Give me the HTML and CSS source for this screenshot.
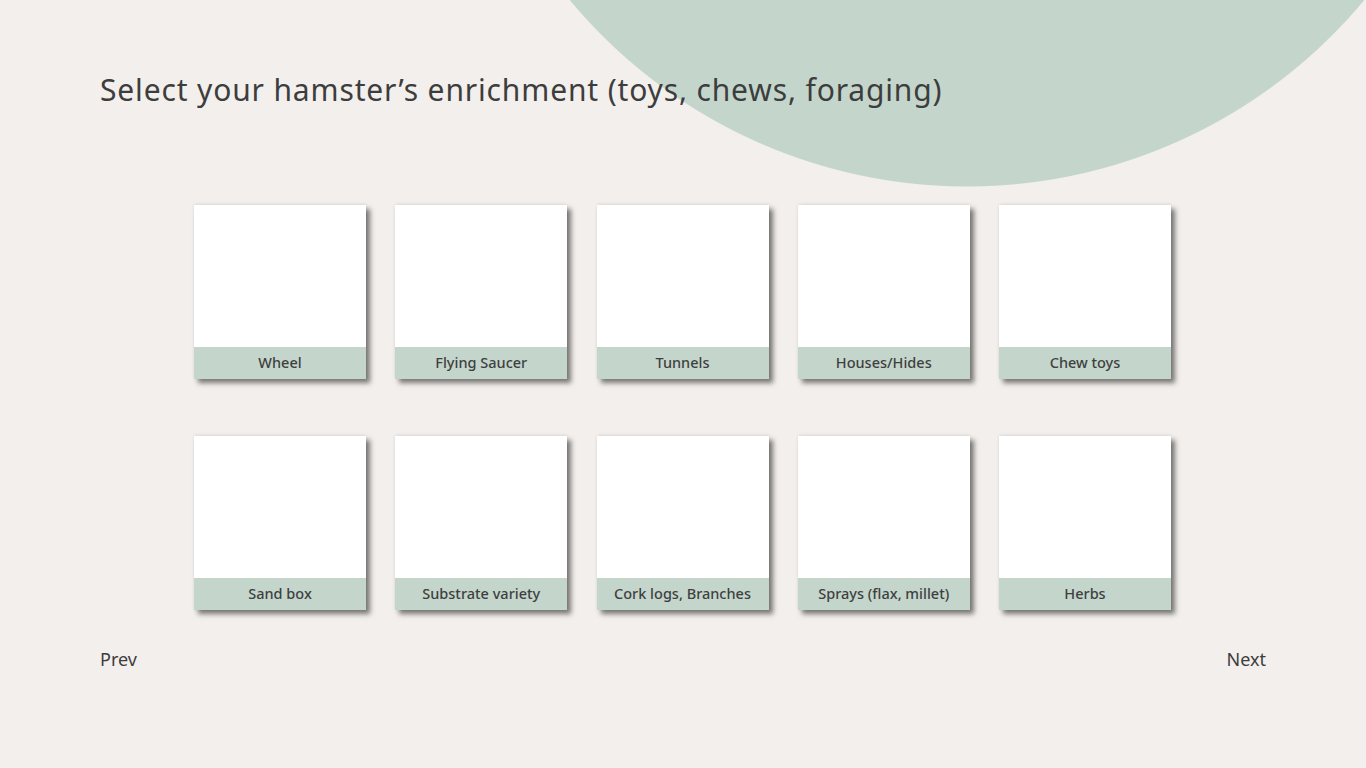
FILE: index.html
```html
<!DOCTYPE html>
<html>
<head>
	<title>Hamster Enrichment</title>
	<link rel="stylesheet" href="styles.css">
</head>
<body>
	<main class="page">
		<h1 class="title">Select your hamster’s enrichment (toys, chews, foraging)</h1>

		<div class="grid">
			<div class="card"><div class="pic"></div><div class="label">Wheel</div></div>
			<div class="card"><div class="pic"></div><div class="label">Flying Saucer</div></div>
			<div class="card"><div class="pic"></div><div class="label">Tunnels</div></div>
			<div class="card"><div class="pic"></div><div class="label">Houses/Hides</div></div>
			<div class="card"><div class="pic"></div><div class="label">Chew toys</div></div>

			<div class="card"><div class="pic"></div><div class="label">Sand box</div></div>
			<div class="card"><div class="pic"></div><div class="label">Substrate variety</div></div>
			<div class="card"><div class="pic"></div><div class="label">Cork logs, Branches</div></div>
			<div class="card"><div class="pic"></div><div class="label">Sprays (flax, millet)</div></div>
			<div class="card"><div class="pic"></div><div class="label">Herbs</div></div>
		</div>

		<nav class="pager">
			<a href="#">Prev</a>
			<a href="#">Next</a>
		</nav>
	</main>
</body>
</html>
```

FILE: styles.css
```css
html, body {margin:0; padding:0;}
/* big green half circle behind the title is drawn as a background */
body {color:#3d3d3d; font-family:"Noto Sans", Arial, sans-serif; height:768px; overflow:hidden;
	background:#f2efec radial-gradient(circle 517px at 967px -330px, #c4d6cc 99.8%, rgba(196,214,204,0) 100%) no-repeat;}

.page {padding:0 100px;}
.title {margin:0; padding-top:69px; font-size:30px; font-weight:400; line-height:42px;
	letter-spacing:0.85px;}

.grid {display:flex; flex-wrap:wrap; justify-content:space-between; row-gap:57px;
	width:977px; margin:94px 0 0 94px;}
.card {width:172px; height:174px; background:#fff; display:flex; flex-direction:column;
	box-shadow:4px 4px 5px rgba(0,0,0,0.5), 0 -1px 3px rgba(0,0,0,0.08);}
.pic {flex:1;}
.label {height:32px; line-height:31px; background:#c4d6cc; text-align:center;
	font-size:14.5px; font-weight:500; color:#3f3f3f;}

.pager {display:flex; justify-content:space-between; margin-top:37px; font-size:18px;}
.pager a {color:#3d3d3d; text-decoration:none;}
```
